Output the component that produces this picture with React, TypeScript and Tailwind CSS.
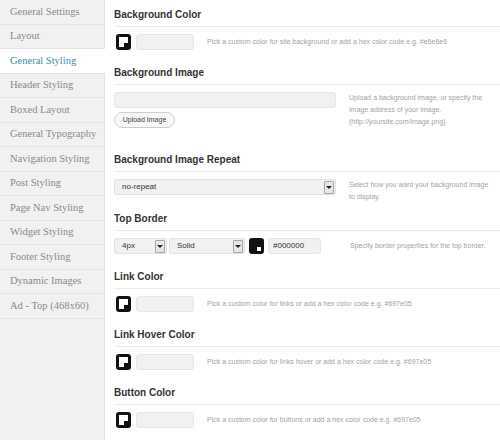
import React from "react";

const navItems = [
  "General Settings",
  "Layout",
  "General Styling",
  "Header Styling",
  "Boxed Layout",
  "General Typography",
  "Navigation Styling",
  "Post Styling",
  "Page Nav Styling",
  "Widget Styling",
  "Footer Styling",
  "Dynamic Images",
  "Ad - Top (468x60)",
];

function Swatch({ dark = false }: { dark?: boolean }) {
  return (
    <div
      className={`relative w-[15px] h-[16px] rounded-[3px] border-[3px] border-[#111] ${
        dark ? "bg-[#111]" : "bg-white"
      }`}
    >
      <div
        className={`absolute right-0 bottom-0 w-[4px] h-[4px] ${
          dark ? "bg-white" : "bg-[#111]"
        }`}
      />
    </div>
  );
}

function Arrow() {
  return (
    <div className="w-[10px] h-[13px] border border-[#a8a8a8] bg-[#e6e6e6] rounded-[1px] flex items-center justify-center">
      <div className="w-0 h-0 border-l-[3px] border-r-[3px] border-t-[3px] border-l-transparent border-r-transparent border-t-[#222]" />
    </div>
  );
}

function Select({ value, w }: { value: string; w: string }) {
  return (
    <div
      className={`${w} h-[16px] bg-[#f1f1f1] border border-[#e2e2e2] rounded-[2px] flex items-center justify-between pl-[7px] pr-[1px] text-[8px] text-[#333]`}
    >
      <span>{value}</span>
      <Arrow />
    </div>
  );
}

function Heading({ children }: { children: React.ReactNode }) {
  return (
    <div className="pt-[8px] pb-[4px] h-[27px] border-b border-[#ececec] text-[10px] leading-[14px] font-bold text-[#333]">
      {children}
    </div>
  );
}

function Desc({ children }: { children: React.ReactNode }) {
  return <div className="text-[7px] leading-[12px] text-[#a3a3a3]">{children}</div>;
}

function ColorSection({ title, desc }: { title: string; desc: string }) {
  return (
    <div className="pb-[8px]">
      <Heading>{title}</Heading>
      <div className="mt-[7px] h-[16px] flex items-center pl-[2px]">
        <Swatch />
        <div className="ml-[5px] w-[58px] h-[16px] bg-[#f1f1f1] border border-[#e6e6e6] rounded-[3px]" />
        <div className="ml-[13px]">
          <Desc>{desc}</Desc>
        </div>
      </div>
    </div>
  );
}

export default function App() {
  return (
    <div
      className="w-[500px] h-[440px] flex bg-white overflow-hidden"
      style={{ fontFamily: '"Liberation Sans", Arial, sans-serif' }}
    >
      <div className="w-[105px] shrink-0 bg-[#f1f1f1] border-r border-[#e3e3e3] flex flex-col">
        {navItems.map((item) => {
          const active = item === "General Styling";
          return (
            <div
              key={item}
              className={`h-[24.5px] border-b border-[#e2e2e2] pl-[10px] flex items-center text-[10.5px] ${
                active ? "bg-white text-[#3d8ba8] mr-[-1px]" : "text-[#8a8a8a]"
              }`}
              style={{ fontFamily: '"Liberation Serif", "DejaVu Serif", serif' }}
            >
              {item}
            </div>
          );
        })}
      </div>
      <div className="flex-1 pl-[9px] flex flex-col">
        <ColorSection
          title="Background Color"
          desc="Pick a custom color for site background or add a hex color code e.g. #e6e6e6"
        />
        <div className="pb-[8px]">
          <Heading>Background Image</Heading>
          <div className="mt-[7px] h-[45px] flex">
            <div className="w-[222px] flex flex-col">
              <div className="h-[16px] bg-[#f1f1f1] border border-[#e6e6e6] rounded-[3px]" />
              <div className="mt-[4px] w-[61px] h-[16px] rounded-full border border-[#cfcfcf] bg-[#f7f7f7] flex items-center justify-center text-[7px] text-[#444]">
                Upload Image
              </div>
            </div>
            <div className="ml-[13px]">
              <Desc>
                Upload a background image, or specify the
                <br />
                image address of your image.
                <br />
                (http://yoursite.com/image.png)
              </Desc>
            </div>
          </div>
        </div>
        <div className="pb-[8px]">
          <Heading>Background Image Repeat</Heading>
          <div className="mt-[7px] h-[17px] flex">
            <Select value="no-repeat" w="w-[222px]" />
            <div className="ml-[13px]">
              <Desc>
                Select how you want your background image
                <br />
                to display.
              </Desc>
            </div>
          </div>
        </div>
        <div className="pb-[8px]">
          <Heading>Top Border</Heading>
          <div className="mt-[7px] h-[16px] flex items-center">
            <Select value="4px" w="w-[53px]" />
            <div className="ml-[2px]">
              <Select value="Solid" w="w-[76px]" />
            </div>
            <div className="ml-[4px]">
              <Swatch dark />
            </div>
            <div className="ml-[4px] w-[53px] h-[16px] bg-[#f1f1f1] border border-[#e6e6e6] rounded-[3px] flex items-center pl-[4px] text-[8px] text-[#333]">
              #000000
            </div>
            <div className="ml-[29px]">
              <Desc>Specify border properties for the top border.</Desc>
            </div>
          </div>
        </div>
        <ColorSection
          title="Link Color"
          desc="Pick a custom color for links or add a hex color code e.g. #697e05"
        />
        <ColorSection
          title="Link Hover Color"
          desc="Pick a custom color for links hover or add a hex color code e.g. #697e05"
        />
        <ColorSection
          title="Button Color"
          desc="Pick a custom color for buttons or add a hex color code e.g. #697e05"
        />
      </div>
    </div>
  );
}
